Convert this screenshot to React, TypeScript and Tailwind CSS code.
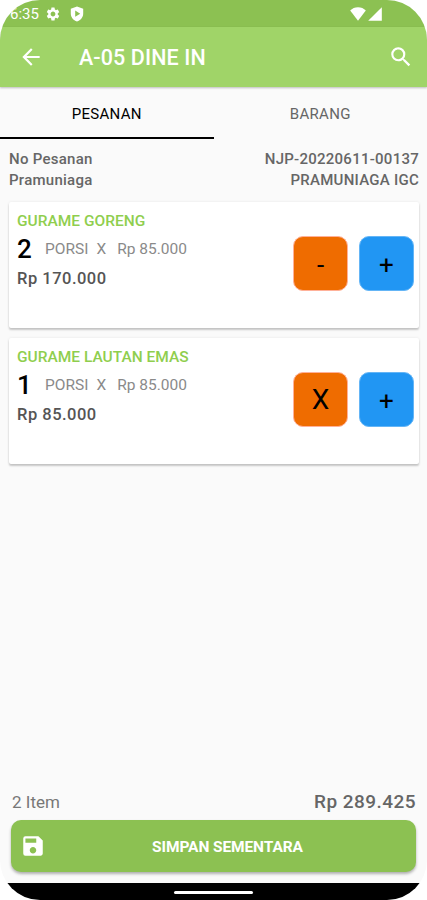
import { MdArrowBack, MdSave, MdSearch, MdSettings } from "react-icons/md";

interface OrderItem {
  id: number;
  name: string;
  qty: number;
  unit: string;
  price: string;
  total: string;
}

const items: OrderItem[] = [
  { id: 1, name: "GURAME GORENG", qty: 2, unit: "PORSI", price: "Rp 85.000", total: "Rp 170.000" },
  { id: 2, name: "GURAME LAUTAN EMAS", qty: 1, unit: "PORSI", price: "Rp 85.000", total: "Rp 85.000" },
];

function StatusBar() {
  return (
    <div className="flex h-[27px] shrink-0 items-center bg-[#8cc152] pr-[45px] text-white">
      <span className="ml-[10px] w-[29px] pt-px text-[15px] leading-[27px]">6:35</span>
      <MdSettings className="ml-[6px] size-4" />
      <svg viewBox="0 0 14 16" className="ml-[9px] h-4 w-[14px]">
        <path
          fillRule="evenodd"
          d="M7 .4 13.2 2.7v4.8c0 3.800-2.500 6.600-6.200 8.100C3.300 14.100.8 11.300.8 7.500V2.700zM5.200 4.600v6.200L10.200 7.700z"
          fill="currentColor"
        />
      </svg>
      <div className="flex-1" />
      <svg viewBox="0 0 16 14" className="h-[14px] w-4">
        <path d="M8 13.800.2 3.600C2.200 1.500 4.900.3 8 .3s5.800 1.200 7.800 3.300z" fill="currentColor" />
      </svg>
      <svg viewBox="0 0 14 14" className="ml-[2px] h-[14px] w-[14px]">
        <path d="M.2 13.800h13.600V.2z" fill="currentColor" />
      </svg>
    </div>
  );
}

function AppHeader() {
  return (
    <header className="z-10 flex h-[60px] shrink-0 items-center bg-[#a0d468] px-[18px] text-white shadow-[0_1px_2px_rgba(0,0,0,0.25)]">
      <button>
        <MdArrowBack className="size-[26px]" />
      </button>
      <h1 className="ml-[35px] flex-1 pt-[2px] text-[21.5px] font-medium tracking-[0.1px]">A-05 DINE IN</h1>
      <button className="-mr-[5px]">
        <MdSearch className="size-[26px]" />
      </button>
    </header>
  );
}

function Tabs() {
  return (
    <div className="grid h-[52px] shrink-0 grid-cols-2 text-center text-[15px] leading-5 tracking-[0.3px]">
      <button className="border-b-2 border-black pt-1 text-black">PESANAN</button>
      <button className="border-b-2 border-transparent pt-1 text-[#666]">BARANG</button>
    </div>
  );
}

function OrderCard({ item }: { item: OrderItem }) {
  return (
    <div className="flex h-[126px] rounded-[2px] bg-white pl-2 pr-[5px] shadow-[0_2px_2px_rgba(0,0,0,0.2),0_0_3px_rgba(0,0,0,0.08)]">
      <div className="flex-1 pt-[9px]">
        <div className="text-[15.5px] font-medium leading-5 text-[#8fce4e]">{item.name}</div>
        <div className="flex h-[37px] items-center pt-px text-[15.5px] text-[#8a8a8a]">
          <span className="w-[28px] pb-px text-[26px] font-medium text-black">{item.qty}</span>
          <span>{item.unit}</span>
          <span className="ml-[8px]">X</span>
          <span className="ml-[11px]">{item.price}</span>
        </div>
        <div className="text-[16.5px] font-medium leading-[22px] tracking-[0.5px] text-[#555]">{item.total}</div>
      </div>
      <div className="mt-[34px] flex gap-[11px] text-[26px] text-black">
        {item.qty > 1 ? (
          <button className="size-[55px] rounded-[10px] border border-[#ffb199] bg-[#ef6c00] pt-[2px] leading-[53px]">-</button>
        ) : (
          <button className="size-[55px] rounded-[10px] border border-[#ffb199] bg-[#ef6c00] text-[28px] leading-[53px]">
            X
          </button>
        )}
        <button className="size-[55px] rounded-[10px] border border-[#64b5f6] bg-[#2196f3] pt-[2px] leading-[53px]">
          +
        </button>
      </div>
    </div>
  );
}

export default function App() {
  return (
    <div className="h-[900px] w-[427px] bg-white">
      <div className="flex h-full flex-col overflow-hidden rounded-[40px] bg-[#fafafa] font-['Roboto',sans-serif]">
        <StatusBar />
        <AppHeader />
        <Tabs />
        <div className="flex justify-between pl-[9px] pr-2 pt-[10px] text-[15px] font-medium leading-[21px] tracking-[0.26px] text-[#666]">
          <div>
            <p>No Pesanan</p>
            <p>Pramuniaga</p>
          </div>
          <div className="text-right">
            <p>NJP-20220611-00137</p>
            <p>PRAMUNIAGA IGC</p>
          </div>
        </div>
        <div className="mt-[11px] flex flex-1 flex-col gap-[10px] pl-[9px] pr-2">
          {items.map((item) => (
            <OrderCard key={item.id} item={item} />
          ))}
        </div>
        <div className="flex items-center justify-between pl-3 pr-[11px] leading-6">
          <span className="text-[17px] text-[#777]">{items.length} Item</span>
          <span className="text-[19px] font-medium tracking-[0.45px] text-[#666]">Rp 289.425</span>
        </div>
        <button className="mx-[11px] mb-[11px] mt-[6px] flex h-[52px] shrink-0 items-center rounded-[10px] bg-[#8cc152] pl-[9px] text-white shadow-[0_2px_3px_rgba(0,0,0,0.3)]">
          <MdSave className="size-[26px]" />
          <span className="flex-1 pr-[7px] pt-[3px] text-center text-[15.5px] font-bold tracking-[-0.1px]">
            SIMPAN SEMENTARA
          </span>
        </button>
        <div className="flex h-[17px] shrink-0 justify-center bg-black pt-2">
          <div className="h-[3px] w-[79px] rounded-full bg-white" />
        </div>
      </div>
    </div>
  );
}
